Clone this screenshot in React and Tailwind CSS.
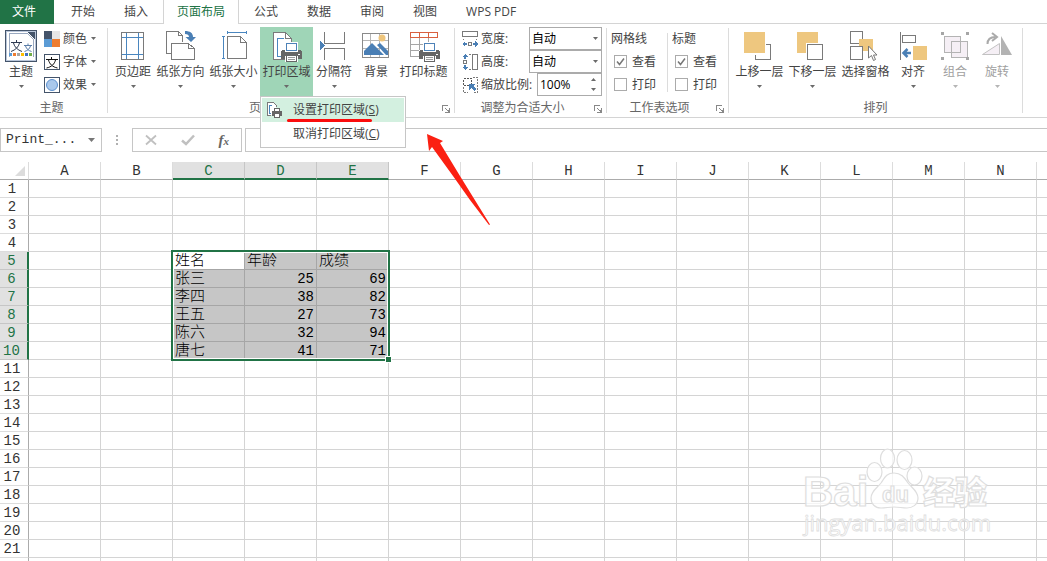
import React, { useState } from 'react';

const TABS = ['开始', '插入', '页面布局', '公式', '数据', '审阅', '视图', 'WPS PDF'];
const COLUMNS = ['A', 'B', 'C', 'D', 'E', 'F', 'G', 'H', 'I', 'J', 'K', 'L', 'M', 'N'];
const ROWS = Array.from({ length: 21 }, (_, i) => i + 1);

const CELLS = {
  5: { C: '姓名', D: '年龄', E: '成绩' },
  6: { C: '张三', D: 25, E: 69 },
  7: { C: '李四', D: 38, E: 82 },
  8: { C: '王五', D: 27, E: 73 },
  9: { C: '陈六', D: 32, E: 94 },
  10: { C: '唐七', D: 41, E: 71 },
};

const isSelectedCol = (col) => ['C', 'D', 'E'].includes(col);
const isSelectedRow = (row) => row >= 5 && row <= 10;

// ==================================================
// ICONS
// ==================================================
const Icon = ({ size = 32, children }) => (
  <svg
    width={size}
    height={size}
    viewBox={`0 0 ${size} ${size}`}
    fill="none"
    stroke="#7a7a7a"
    shapeRendering="crispEdges"
    aria-hidden="true"
    className="shrink-0"
  >
    {children}
  </svg>
);

const Caret = ({ className = 'text-[#6a6a6a]' }) => (
  <svg width="5" height="3" viewBox="0 0 5 3" aria-hidden="true" className={`shrink-0 ${className}`}>
    <path d="M0 0h5L2.500 3z" fill="currentColor" />
  </svg>
);

const Printer = ({ x, y }) => (
  <g transform={`translate(${x} ${y})`} stroke="none">
    <path d="M4 -1h13v10H4z" fill="#fff" />
    <path d="M5.500.5h10v7h-10z" fill="#fff" stroke="#4d82b8" />
    <path d="M1 7h3v2h13V7h3v1h1v8H0V8h1z" fill="#666" />
    <path d="M17 11h2v1h-2z" fill="#fff" />
    <path d="M4 13h13v7H4z" fill="#fff" />
    <path d="M5.500 12.500h10v6h-10z" fill="#fff" stroke="#666" />
    <path d="M7 14.500h7M7 16.500h7" stroke="#999" />
  </g>
);

const ThemeIcon = () => (
  <Icon>
    <path d="M.5.5h31v31H.5z" fill="#fff" stroke="#44546a" />
    <path d="M1.500 1.500h29v29h-29z" stroke="#b9c6da" />
    <path d="M4.500 26.500v-23h18l6 6v17" stroke="#9aa9c0" />
    <path d="M22 2h8v8z" fill="#44546a" stroke="none" />
    <g shapeRendering="auto">
      <path d="M6 12.500h11M11.500 10v2.500M8.500 13c1 4 4 7 8.500 8.500M14.500 13c-1 4-4 7-8.500 8.500" stroke="#2f3b52" />
      <path d="M19 15.500h8M23 13.500v2M20.500 16c1 3 3 4.500 6 5.500M25.500 16c-1 3-3 4.500-6 5.500" stroke="#5b7ea9" />
    </g>
    <g stroke="none">
      <path d="M4 23h3v3H4z" fill="#5b9bd5" />
      <path d="M8 23h3v3H8z" fill="#ed7d31" />
      <path d="M12 23h3v3h-3z" fill="#a5a5a5" />
      <path d="M16 23h3v3h-3z" fill="#ffc000" />
      <path d="M20 23h3v3h-3z" fill="#4472c4" />
      <path d="M24 23h3v3h-3z" fill="#70ad47" />
    </g>
  </Icon>
);

const ColorsIcon = () => (
  <Icon size={16}>
    <g stroke="none">
      <path d="M0 0h8v8H0z" fill="#44546a" />
      <path d="M8 0h8v8H8z" fill="#e7e6e6" />
      <path d="M0 8h8v8H0z" fill="#5b9bd5" />
      <path d="M8 8h8v8H8z" fill="#ed7d31" />
    </g>
  </Icon>
);

const FontsIcon = () => (
  <Icon size={16}>
    <path d="M.5.5h15v15H.5z" fill="#fff" stroke="#44546a" />
    <path d="M2 5.500h12M7.500 3v2M4.500 6c1 4 4 7 9 8M11.500 6c-1 4-4 7-9 8" stroke="#111" shapeRendering="auto" />
  </Icon>
);

const EffectsIcon = () => (
  <Icon size={16}>
    <path d="M.5.5h15v15H.5z" fill="#fff" stroke="#44546a" />
    <circle cx="8" cy="8" r="5.500" fill="#a9c8ec" stroke="#5b8fce" shapeRendering="auto" />
  </Icon>
);

const MarginsIcon = () => (
  <Icon>
    <path d="M4.500 2.500h22v27h-22z" fill="#fff" />
    <path d="M9.500 3v26M21.500 3v26M5 7.500h21M5 24.500h21" stroke="#4a86bf" />
  </Icon>
);

const OrientationIcon = () => (
  <Icon>
    <path d="M6 23.500H1.500v-22h12l4 4v6M13.500 1.500v4h4" />
    <path d="M6.500 13.500h17l6 5v11h-23zM23.500 13.500v5h6" fill="#fff" />
    <g shapeRendering="auto" stroke="none" fill="#4a7fb5">
      <path d="M20 1c5 0 8 2 8 6h3l-5 5-5.500-5H24c0-2-1.500-3-4-3z" />
    </g>
  </Icon>
);

const SizeIcon = () => (
  <Icon>
    <path d="M9.500 6.500h13l6 6v16h-19zM22.500 6.500v6h6" fill="#fff" />
    <path d="M9 2.500h19M9.500 1v3M28.500 1v3M5.500 7v21M4 6.500h3M4 28.500h3" stroke="#4a86bf" />
  </Icon>
);

const PrintAreaIcon = () => (
  <Icon>
    <path d="M2.500 2.500h12l6 6v21h-18z" fill="#fff" />
    <path d="M14.500 2.500v6h6" />
    <path d="M13 8.500H6.500v18H11" stroke="#4a86bf" />
    <Printer x={10} y={13} />
  </Icon>
);

const BreaksIcon = () => (
  <Icon>
    <path d="M6.500 2v11.500h20V2M6.500 30V18.500h20V30" />
    <path d="M2 11l5 4.500L2 20z" fill="#4a7fb5" stroke="none" />
  </Icon>
);

const BackgroundIcon = () => (
  <Icon>
    <path d="M2.500 3.500h26v24h-26zM10.500 4v23M19.500 4v23M3 10.500h25M3 18.500h25" stroke="#b5b5b5" />
    <path d="M2.500 3.500h26v24h-26z" stroke="#8a8a8a" />
    <g stroke="none" shapeRendering="auto">
      <circle cx="22" cy="8" r="3.500" fill="#eec57c" />
      <path d="M4 25v-4l8-8 12 12z" fill="#4a7fb5" />
      <path d="M17 15l3-2 8 8v4h-2z" fill="#4a7fb5" />
    </g>
  </Icon>
);

const PrintTitlesIcon = () => (
  <Icon>
    <path d="M2.500 8v18.500H11M11.500 8v12M20.500 8v6M2 14.500h26M2 20.500h9" stroke="#a6a6a6" />
    <path d="M2.500 2.500h27v5h-27zM11.500 3v4M20.500 3v4" fill="#fff" stroke="#d9603f" />
    <Printer x={11} y={13} />
  </Icon>
);

const WidthIcon = () => (
  <Icon size={16}>
    <path d="M.5.5h15v5H.5z" fill="#fff" />
    <path d="M1.500 8v1M14.500 8v1M6.500 11.500h3v3h-3z" />
    <path d="M0 13l3-3v2h2v2H3v2zM16 13l-3-3v2h-2v2h2v2z" fill="#4a7fb5" stroke="none" />
  </Icon>
);

const HeightIcon = () => (
  <Icon size={16}>
    <path d="M10.500.5h5v15h-5z" fill="#fff" />
    <path d="M7 .5h2M7 15.500h2M1.500 6.500h3v3h-3z" />
    <path d="M3 0l3 3H4v2H2V3H0zM3 16l3-3H4v-2H2v2H0z" fill="#4a7fb5" stroke="none" />
  </Icon>
);

const ScaleIcon = () => (
  <Icon size={16}>
    <path d="M1.500 1.500h8v7h-8z" strokeDasharray="2 1" stroke="#555" />
    <path d="M11 .5h4.500v14.500h-4M1.500 10v5.500h4" strokeDasharray="2 1" />
    <path d="M7 7h6l-2 2 3 3-2 2-3-3-2 2z" fill="#4a7fb5" stroke="none" />
  </Icon>
);

const ForwardIcon = () => (
  <Icon>
    <path d="M22 14.500h4.500v15h-15V25" />
    <path d="M0 2h21v21H0z" fill="#eec77f" stroke="none" />
  </Icon>
);

const BackwardIcon = () => (
  <Icon>
    <path d="M0 2h21v21H0z" fill="#eec77f" stroke="none" />
    <path d="M9 13h18v18H9z" fill="#fff" stroke="none" />
    <path d="M10.500 14.500h15v15h-15z" fill="#fff" />
  </Icon>
);

const SelectionPaneIcon = () => (
  <Icon>
    <path d="M.5 1.500h12v12H.5z" fill="#fff" />
    <path d="M9 9h14v12H9z" fill="#eec77f" stroke="none" />
    <path d="M.5 16.500h12v13H.5z" fill="#fff" />
    <path d="M18.500 16v12l3-2.500 2 5 2-1-2-4.500h3.500z" fill="#fff" stroke="#777" shapeRendering="auto" />
  </Icon>
);

const AlignIcon = () => (
  <Icon>
    <path d="M3.500 2v28M5.500 5.500h13v7h-13z" fill="#fff" />
    <path d="M16 16h14v14H16z" fill="#eec77f" stroke="none" />
    <path d="M14 23H7M10.500 19L6.500 23l4 4" stroke="#4a7fb5" strokeWidth="2.500" shapeRendering="auto" />
  </Icon>
);

const GroupIcon = () => (
  <Icon>
    <path d="M5.500 6.500h16v16h-16zM12.500 11.500h16v16h-16z" fill="#f5eff5" stroke="#b3b3b3" />
    <path d="M12.500 11.500h9v11h-9z" stroke="#b3b3b3" />
    <path d="M2 2h3v3H2zM27 2h3v3h-3zM2 27h3v3H2zM27 27h3v3h-3z" fill="#a6a6a6" stroke="none" />
  </Icon>
);

const RotateIcon = () => (
  <Icon>
    <g shapeRendering="auto">
      <path d="M1.500 24.500h17v-11z" fill="#f5eff5" stroke="#c2c2c2" />
      <path d="M20 6v19h11z" fill="#b3b3b3" stroke="none" />
      <path d="M6.500 14c0-5 3-7 8-7" stroke="#aaa" strokeWidth="2" />
      <path d="M11 3l5 4-5 4" stroke="#aaa" strokeWidth="2" />
    </g>
  </Icon>
);

// ==================================================
// RIBBON PARTS
// ==================================================
const BigButton = ({ icon, label, caret = true, wide, active, disabled, onClick }) => (
  <button
    type="button"
    disabled={disabled}
    onClick={onClick}
    className={`flex h-[70px] shrink-0 flex-col items-center pt-[3px] ${wide ? 'w-[53px]' : 'w-[42px]'} ${
      active ? 'bg-[#9fd5b7]' : ''
    } ${disabled ? 'text-[#a0a0a0]' : ''}`}
  >
    {icon}
    <span className="mt-px whitespace-nowrap leading-[18px]">{label}</span>
    {caret && (
      <span className="mt-1">
        <Caret className={disabled ? 'text-[#b5b5b5]' : 'text-[#6a6a6a]'} />
      </span>
    )}
  </button>
);

const SmallButton = ({ icon, label }) => (
  <button type="button" className="flex h-[23px] items-center gap-[3px]">
    {icon}
    <span>{label}</span>
    <span className="ml-px">
      <Caret />
    </span>
  </button>
);

const Group = ({ label, launcher, className = '', children }) => (
  <section aria-label={label} className={`flex shrink-0 flex-col ${className}`}>
    <div className="flex h-[71px]">{children}</div>
    <div className="flex flex-1 items-center text-[#666]">
      <span className="flex-1 text-center leading-[18px]">{label}</span>
      {launcher && (
        <button type="button" aria-label={label} className="flex w-4 items-center justify-center pt-0.5">
          <svg width="8" height="8" viewBox="0 0 8 8" fill="none" stroke="#888" shapeRendering="crispEdges">
            <path d="M.5 6V.5H6M3 3l3 3M7.500 3v4.500H3M6.500 5v2" />
          </svg>
        </button>
      )}
    </div>
  </section>
);

const Divider = () => <div className="mb-1 mt-px w-px shrink-0 bg-[#dcdcdc]" />;

const SizeField = ({ id, icon, label }) => (
  <div className="flex h-[23px] items-center">
    {icon}
    <label htmlFor={id} className="ml-[3px] flex-1">
      {label}
    </label>
    <div className="relative flex h-full">
      <select
        id={id}
        className="w-[73px] appearance-none border border-[#ababab] bg-white pl-0.5 text-black outline-none"
      >
        <option>自动</option>
      </select>
      <span className="pointer-events-none absolute inset-y-0 right-1 flex items-center">
        <Caret />
      </span>
    </div>
  </div>
);

const CheckField = ({ id, label, defaultChecked }) => (
  <div className="flex h-[23px] items-center gap-[5px] pl-[3px]">
    <span className="grid">
      <input
        id={id}
        type="checkbox"
        defaultChecked={defaultChecked}
        className="peer col-start-1 row-start-1 h-[13px] w-[13px] appearance-none border border-[#ababab] bg-white"
      />
      <svg
        viewBox="0 0 13 13"
        fill="none"
        stroke="#777"
        strokeWidth="1.500"
        aria-hidden="true"
        className="pointer-events-none invisible col-start-1 row-start-1 h-[13px] w-[13px] peer-checked:visible"
      >
        <path d="M3 6.500L5.500 9.500 10 3.500" />
      </svg>
    </span>
    <label htmlFor={id}>{label}</label>
  </div>
);

const PrintAreaMenu = () => (
  <div role="menu" className="absolute left-0 top-[69px] z-20 w-[146px] border border-[#c6c6c6] bg-white p-px">
    <button
      type="button"
      role="menuitem"
      className="relative flex h-6 w-full items-center gap-[11px] whitespace-nowrap bg-[#d3f0e0] pl-1"
    >
      <Icon size={16}>
        <path d="M5 13.500H1.500V.5h6l3 3V5" fill="#fff" />
        <path d="M6 3.500H3.500v8H5" stroke="#4a86bf" />
        <path d="M8.500 6.500h5v3h-5z" fill="#fff" stroke="#666" />
        <path d="M6 9h10v5H6z" fill="#666" stroke="none" />
        <path d="M8.500 11.500h5v4h-5z" fill="#fff" stroke="#666" />
      </Icon>
      <span>
        设置打印区域(<u>S</u>)
      </span>
      <span className="absolute bottom-0 left-[25px] h-[3px] w-[85px] rounded-full bg-[#fb0d0d]" />
    </button>
    <button type="button" role="menuitem" className="flex h-6 w-full items-center whitespace-nowrap pl-[31px]">
      <span>
        取消打印区域(<u>C</u>)
      </span>
    </button>
  </div>
);

const Ribbon = () => {
  const [menuOpen, setMenuOpen] = useState(true);

  return (
    <div className="flex h-[94px] shrink-0 border-b border-[#d4d4d4] pt-[3px]">
      <Group label="主题" className="pr-1">
        <BigButton icon={<ThemeIcon />} label="主题" />
        <div className="ml-0.5 w-[59px]">
          <SmallButton icon={<ColorsIcon />} label="颜色" />
          <SmallButton icon={<FontsIcon />} label="字体" />
          <SmallButton icon={<EffectsIcon />} label="效果" />
        </div>
      </Group>
      <Divider />

      <Group label="页面设置" launcher>
        <div className="flex px-1">
          <BigButton icon={<MarginsIcon />} label="页边距" />
          <BigButton icon={<OrientationIcon />} label="纸张方向" wide />
          <BigButton icon={<SizeIcon />} label="纸张大小" wide />
          <div className="relative">
            <BigButton
              icon={<PrintAreaIcon />}
              label="打印区域"
              wide
              active={menuOpen}
              onClick={() => setMenuOpen(!menuOpen)}
            />
            {menuOpen && <PrintAreaMenu />}
          </div>
          <BigButton icon={<BreaksIcon />} label="分隔符" />
          <BigButton icon={<BackgroundIcon />} label="背景" caret={false} />
          <BigButton icon={<PrintTitlesIcon />} label="打印标题" caret={false} wide />
        </div>
      </Group>
      <Divider />

      <Group label="调整为合适大小" launcher>
        <div className="w-[151px] pl-[7px] pr-1">
          <SizeField id="fit-width" icon={<WidthIcon />} label="宽度:" />
          <SizeField id="fit-height" icon={<HeightIcon />} label="高度:" />
          <div className="flex h-[23px] items-center">
            <ScaleIcon />
            <label htmlFor="fit-scale" className="ml-[3px] flex-1 whitespace-nowrap">
              缩放比例:
            </label>
            <div className="flex h-full w-[65px] border border-[#ababab]">
              <input
                id="fit-scale"
                type="text"
                defaultValue="100%"
                className="w-0 min-w-0 flex-1 pl-0.5 text-[12px] text-black outline-none"
              />
              <div className="flex w-4 flex-col items-center justify-between py-1">
                <button type="button" aria-label="增加" className="rotate-180">
                  <Caret />
                </button>
                <button type="button" aria-label="减少">
                  <Caret />
                </button>
              </div>
            </div>
          </div>
        </div>
      </Group>
      <Divider />

      <Group label="工作表选项" launcher>
        <fieldset className="w-[60px] pl-1">
          <legend className="h-[23px] leading-[23px]">网格线</legend>
          <CheckField id="grid-view" label="查看" defaultChecked />
          <CheckField id="grid-print" label="打印" />
        </fieldset>
        <div className="my-1.5 w-px bg-[#dcdcdc]" />
        <fieldset className="w-[60px] pl-1">
          <legend className="h-[23px] leading-[23px]">标题</legend>
          <CheckField id="head-view" label="查看" defaultChecked />
          <CheckField id="head-print" label="打印" />
        </fieldset>
      </Group>
      <Divider />

      <Group label="排列">
        <div className="flex px-1">
          <BigButton icon={<ForwardIcon />} label="上移一层" wide />
          <BigButton icon={<BackwardIcon />} label="下移一层" wide />
          <BigButton icon={<SelectionPaneIcon />} label="选择窗格" wide caret={false} />
          <BigButton icon={<AlignIcon />} label="对齐" />
          <BigButton icon={<GroupIcon />} label="组合" disabled />
          <BigButton icon={<RotateIcon />} label="旋转" disabled />
        </div>
      </Group>
      <Divider />
    </div>
  );
};

// ==================================================
// TABS AND FORMULA BAR
// ==================================================
const TabBar = () => (
  <nav className="flex h-6 shrink-0">
    <button type="button" className="w-[54px] bg-[#217346] pl-3 text-left text-white">
      文件
    </button>
    <div className="flex flex-1 gap-px border-b border-[#d4d4d4] pl-[3px]">
      {TABS.map((tab) => (
        <button
          key={tab}
          type="button"
          className={
            tab === '页面布局'
              ? '-mb-px whitespace-nowrap border-x border-[#d4d4d4] bg-white px-[13px] text-[#217346]'
              : 'whitespace-nowrap px-3.5'
          }
        >
          {tab}
        </button>
      ))}
    </div>
  </nav>
);

const FormulaBar = () => (
  <div className="flex h-11 shrink-0 items-start pt-2.5">
    <div className="flex h-6 w-[102px] shrink-0 items-center border border-[#c6c6c6] pr-1.5">
      <input
        type="text"
        aria-label="名称框"
        defaultValue="Print_..."
        className="w-0 min-w-0 flex-1 pl-[5px] font-['Liberation_Mono',monospace] text-[13px] text-[#333] outline-none"
      />
      <svg width="7" height="4" viewBox="0 0 7 4" aria-hidden="true">
        <path d="M0 0h7L3.500 4z" fill="#777" />
      </svg>
    </div>
    <svg width="30" height="24" viewBox="0 0 30 24" fill="#b0b0b0" aria-hidden="true" className="shrink-0">
      <path d="M14 7h2v2h-2zM14 11h2v2h-2zM14 15h2v2h-2z" />
    </svg>
    <div className="flex h-6 w-[110px] shrink-0 items-center justify-around border border-[#c6c6c6]">
      <button type="button" aria-label="取消">
        <svg width="12" height="12" viewBox="0 0 12 12" fill="none" stroke="#c0c0c0" strokeWidth="1.800">
          <path d="M1 1.500l10 9M11 1.500l-10 9" />
        </svg>
      </button>
      <button type="button" aria-label="输入">
        <svg width="14" height="12" viewBox="0 0 14 12" fill="none" stroke="#c0c0c0" strokeWidth="2.500">
          <path d="M1 6.500L5 10l8-8.500" />
        </svg>
      </button>
      <button type="button" className="font-['Liberation_Serif',serif] text-[15px] font-bold italic text-[#666]">
        f<span className="text-[11px]">x</span>
      </button>
    </div>
    <input
      type="text"
      aria-label="编辑栏"
      className="ml-[3px] h-6 min-w-0 flex-1 border border-r-0 border-[#c6c6c6] px-2 outline-none"
    />
  </div>
);

// ==================================================
// SHEET
// ==================================================
const SelectionFrame = () => (
  <div className="pointer-events-none absolute -left-0.5 -top-0.5 z-10 h-[111px] w-[219px] border-2 border-[#217346]">
    <div className="h-full border border-white" />
    <div className="absolute -bottom-1 -right-1 h-[7px] w-[7px] border border-white bg-[#217346]" />
  </div>
);

const cellClass = (row, col) => {
  if (!isSelectedRow(row) || !isSelectedCol(col)) return 'border-[#d4d4d4]';
  if (row === 5 && col === 'C') return 'relative border-[#a6a6a6] bg-white';
  return 'border-[#a6a6a6] bg-[#c6c6c6]';
};

const Sheet = () => (
  <div className="min-h-0 flex-1 overflow-hidden">
    <table className="w-full table-fixed border-separate border-spacing-0 font-['Liberation_Mono','Noto_Sans_CJK_SC',monospace] text-[#333]">
      <colgroup>
        <col className="w-[29px]" />
        {COLUMNS.map((col) => (
          <col key={col} className="w-[72px]" />
        ))}
        <col />
      </colgroup>
      <thead>
        <tr className="h-[18px]">
          <td className="border-b border-r border-b-[#ababab] border-r-[#dcdcdc] p-0">
            <svg width="10" height="10" viewBox="0 0 10 10" aria-hidden="true" className="ml-auto mr-[3px]">
              <path d="M10 0v10H0z" fill="#dcdcdc" />
            </svg>
          </td>
          {COLUMNS.map((col) => (
            <th
              key={col}
              scope="col"
              className={`px-0 pb-0 pt-0.5 align-top text-[14px] font-normal leading-[14px] ${
                isSelectedCol(col)
                  ? 'border-b-2 border-r border-b-[#217346] border-r-[#c6c6c6] bg-[#e1e1e1] text-[#217346]'
                  : 'border-b border-r border-b-[#ababab] border-r-[#dcdcdc]'
              }`}
            >
              {col}
            </th>
          ))}
          <td className="border-b border-[#ababab] p-0" />
        </tr>
      </thead>
      <tbody>
        {ROWS.map((row) => (
          <tr key={row} className="h-[18px]">
            <th
              scope="row"
              className={`border-b pb-0 pl-0 pr-1 pt-0.5 align-top text-[14px] font-normal leading-[15px] ${
                isSelectedRow(row)
                  ? 'border-r-2 border-b-[#c6c6c6] border-r-[#217346] bg-[#e1e1e1] text-[#217346]'
                  : 'border-r border-b-[#dcdcdc] border-r-[#ababab]'
              }`}
            >
              {row}
            </th>
            {COLUMNS.map((col) => {
              const value = CELLS[row]?.[col];
              return (
                <td
                  key={col}
                  className={`whitespace-nowrap border-b border-r px-0.5 pb-0 pt-0.5 align-top leading-[15px] text-black ${
                    typeof value === 'number' ? 'text-right text-[14px]' : 'text-[15px] font-light'
                  } ${cellClass(row, col)}`}
                >
                  {value}
                  {row === 5 && col === 'C' && <SelectionFrame />}
                </td>
              );
            })}
            <td className="border-b border-[#d4d4d4] p-0" />
          </tr>
        ))}
        {/* partly visible row at the bottom edge */}
        <tr className="h-[18px]">
          <td className="border-r border-[#ababab] p-0" />
          {COLUMNS.map((col) => (
            <td key={col} className="border-r border-[#d4d4d4] p-0" />
          ))}
          <td className="p-0" />
        </tr>
      </tbody>
    </table>
  </div>
);

// ==================================================
// OVERLAYS
// ==================================================
const Pointer = () => (
  <svg
    width="64"
    height="92"
    viewBox="0 0 64 92"
    aria-hidden="true"
    className="pointer-events-none absolute left-[427px] top-[134px] z-30"
  >
    <path d="M0 0L16 7 13 9 33 42 63 90.500 62 91 43 66 26 42 5 13 2 17z" fill="#fb2012" />
  </svg>
);

const Watermark = () => (
  <svg
    width="196"
    height="96"
    viewBox="0 0 196 96"
    fill="#fff"
    fillOpacity="0.75"
    stroke="#dedede"
    strokeWidth="1.200"
    className="pointer-events-none absolute left-[800px] top-[445px] z-10"
  >
    <ellipse cx="74.500" cy="27" rx="7.500" ry="9.500" />
    <ellipse cx="87.500" cy="13.500" rx="7" ry="9.500" />
    <ellipse cx="104.500" cy="15" rx="7.500" ry="9.500" />
    <ellipse cx="114.500" cy="31" rx="7.500" ry="9" />
    <path d="M94 28c7 0 10 4 14 10 4 5 10 8 10 15 0 7-6 10-11 10-5 0-8-1-13-1s-8 1-13 1c-6 0-10-4-10-10 0-7 6-10 10-15 4-6 6-10 13-10z" />
    <g fontFamily="'Liberation Sans', sans-serif" fontWeight="700">
      <text x="3" y="61" fontSize="42">
        Bai
      </text>
      <text x="82" y="57" fontSize="22">
        du
      </text>
    </g>
    <text x="4" y="86" fontSize="22" strokeWidth="0.800" fontFamily="'Open Sans', sans-serif">
      jingyan.baidu.com
    </text>
    <text x="123" y="59" fontSize="32" fontWeight="900" fontFamily="'Noto Sans CJK SC', sans-serif">
      经验
    </text>
  </svg>
);

const App = () => {
  return (
    <div className="relative flex h-screen flex-col overflow-hidden bg-white font-['Open_Sans','Noto_Sans_CJK_SC',sans-serif] text-[12px] leading-[18px] text-[#444]">
      <TabBar />
      <Ribbon />
      <FormulaBar />
      <Sheet />
      <Pointer />
      <Watermark />
    </div>
  );
};

export default App;
